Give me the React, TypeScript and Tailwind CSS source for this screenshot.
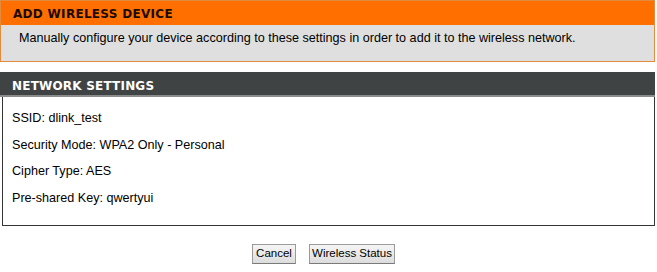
export default function App() {
  const rows = [
    "SSID: dlink_test",
    "Security Mode: WPA2 Only - Personal",
    "Cipher Type: AES",
    "Pre-shared Key: qwertyui",
  ];

  return (
    <div className="w-[657px] h-[272px] bg-white font-['Liberation_Sans',sans-serif] text-[12.6px] text-black">
      {/* Add wireless device box */}
      <div className="w-[655px] border border-[#e28b3c]">
        <div className="h-[24px] bg-[#ff6f00] pl-[12px] pt-[2px] flex items-center font-['DejaVu_Sans',sans-serif] font-bold text-[12px] tracking-[0.3px] text-[#1a0a00]">
          ADD WIRELESS DEVICE
        </div>
        <div className="h-[36px] bg-[#dfdfdf] pl-[18px] pt-[4px]">
          Manually configure your device according to these settings in order to add it to the wireless network.
        </div>
      </div>

      {/* Network settings */}
      <div className="mt-[10px] w-[655px]">
        <div className="h-[25px] bg-[#404343] border-b-[2px] border-[#8a8c8c] pl-[12px] pt-[4px] flex items-center font-['DejaVu_Sans',sans-serif] font-bold text-[12px] tracking-[0.2px] text-white">
          NETWORK SETTINGS
        </div>
        <div className="ml-[2px] w-[653px] h-[129px] border-x border-b border-[#333535] pl-[9px] pt-[14px] flex flex-col gap-[11.5px]">
          {rows.map((r) => (
            <div key={r} className="leading-[15px]">
              {r}
            </div>
          ))}
        </div>
      </div>

      {/* Buttons */}
      <div className="mt-[18px] flex justify-center gap-[13px] pr-[10px]">
        <button className="w-[44px] h-[20px] border border-[#9a9a9a] border-b-[#7a7a7a] bg-gradient-to-b from-[#f6f6f6] to-[#dcdcdc] text-[11.5px]">
          Cancel
        </button>
        <button className="w-[86px] h-[20px] border border-[#9a9a9a] border-b-[#7a7a7a] bg-gradient-to-b from-[#f6f6f6] to-[#dcdcdc] text-[11.5px]">
          Wireless Status
        </button>
      </div>
    </div>
  );
}
